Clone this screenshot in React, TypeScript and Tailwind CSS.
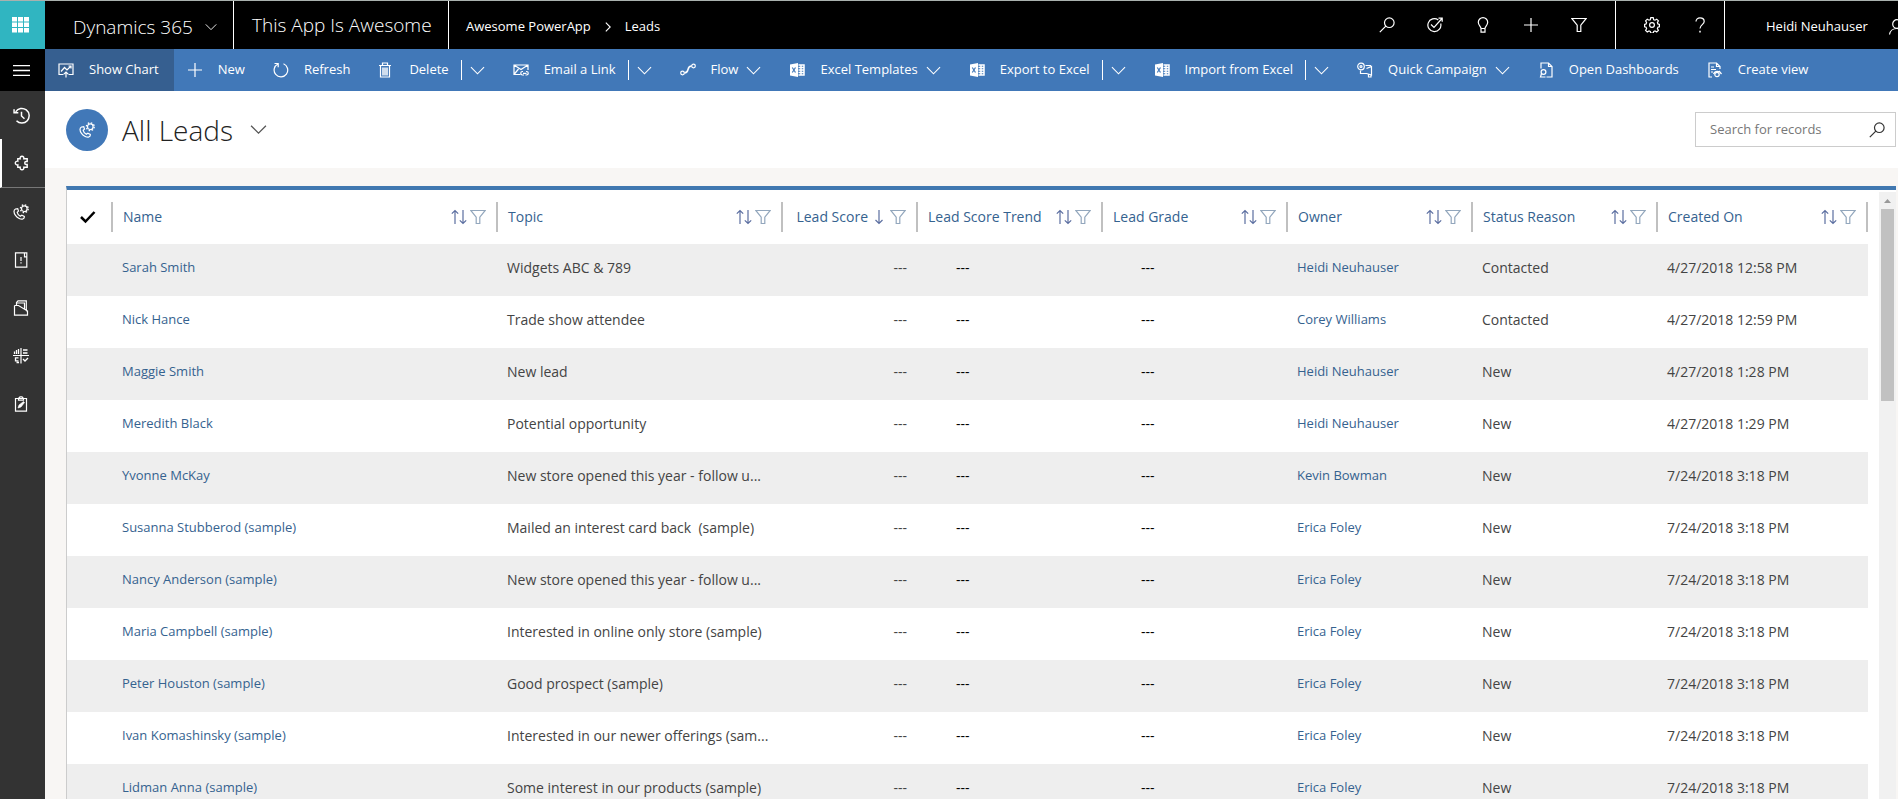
import { ReactNode } from "react";
import clsx from "clsx";

const icons: Record<string, ReactNode> = {
  chart: (
    <>
      <path d="M5.500 12.500H1V2h14v10.500h-4.500" />
      <path d="M3 9.500l3.500-4 2.500 2.500L13 4M10.500 4H13v2.500" />
      <path d="M8 15.500v-5M5.800 12.200L8 10l2.200 2.200" />
    </>
  ),
  plus: <path d="M8 1v14M1 8h14" />,
  refresh: <path d="M10.500 1.800a6.800 6.800 0 1 1-5.600.2M1.500 1.500h3.700v3.700" />,
  trash: (
    <>
      <path d="M1 3.500h12M4.500 3V1h5v2M2.500 4v11h9V4" />
      <path d="M5 5.500v8M7 5.500v8M9 5.500v8" strokeWidth="1.500" />
    </>
  ),
  mail: (
    <>
      <path d="M7.500 12.500H1V3h14v5M1 3l7 4.500L15 3M1 12.500l4.500-5.500" />
      <path d="M10 9.500h-.500a1.700 1.700 0 0 0 0 3.500H11M13 9.500h.5a1.700 1.700 0 0 1 0 3.500H12.500M10 11.300h3.500" />
    </>
  ),
  flow: (
    <>
      <circle cx="2.500" cy="11" r="1.800" />
      <circle cx="13.500" cy="4" r="1.800" />
      <path d="M4.500 11c5.500 0 1.500-7 7-7" strokeWidth="1.500" />
    </>
  ),
  excel: (
    <>
      <path d="M1 2.500L9 1v14l-8-1.500z" fill="currentColor" stroke="none" />
      <path d="M9.500 3H15v10H9.500M9.500 5.500H15M9.500 8H15M9.500 10.500H15M12 3v10" strokeWidth="1.500" />
      <path d="M3.300 5.500l3.200 5M6.500 5.500l-3.200 5" className="stroke-[#4178b8]" />
    </>
  ),
  campaign: (
    <>
      <circle cx="4" cy="4.500" r="3.300" />
      <circle cx="4" cy="4.500" r="1" />
      <path d="M8.500 3.500H14M3.500 8.500v3h6l5 1.500V4.500L9.500 6.500M11.500 12v3H14v-2.500" />
    </>
  ),
  dashboards: (
    <>
      <path d="M3 6.500V1h7.500L14 4.500V15H8.500M10.500 1v3.500H14" />
      <circle cx="5.500" cy="10" r="2.400" />
      <path d="M3.500 11.500L2.500 15h5" />
    </>
  ),
  createView: (
    <>
      <path d="M5 15H2V1h7.500L13 4.500V7M9.500 1v3.500H13M4 5h3M4 7.500h5M4 10h2" />
      <circle cx="10" cy="12.500" r="2.200" />
      <path d="M6.500 12c1.500-3.500 6-3.500 8 0M12 9l2.500 3" />
    </>
  ),
  search: (
    <>
      <circle cx="10.300" cy="5.700" r="4.800" />
      <path d="M6.800 9.200L.8 15.200" />
    </>
  ),
  assist: (
    <>
      <path d="M11.300 2.900A6.500 6.500 0 1 0 13.700 6.500" />
      <path d="M4 7.500l3 3 8-9M11.500 1.200h3.700v3.600" />
    </>
  ),
  bulb: <path d="M6 11.500C6 9.500 3.300 8.500 3.300 5.300a4.700 4.700 0 0 1 9.400 0c0 3.200-2.700 4.200-2.700 6.200zM6 11.500v3.700h4v-3.700" />,
  filter: <path d="M.8 1.500h14.400L9.800 8.200v6.300H6.200V8.200z" />,
  gear: (
    <>
      <circle cx="8" cy="8" r="2.400" />
      <path d="M6.800 .7h2.400l.5 2 1.300.5 1.700-1 1.700 1.700-1 1.700.5 1.300 1.500.5v2.400l-1.500.5-.5 1.300 1 1.700-1.700 1.700-1.700-1-1.300.5-.5 1.500H6.800l-.5-1.500-1.300-.5-1.700 1-1.700-1.700 1-1.700-.5-1.300-1.500-.5V7.400l1.500-.5.5-1.300-1-1.700 1.700-1.700 1.700 1 1.300-.5z" />
    </>
  ),
  help: (
    <>
      <path d="M4 4.500C4 2.300 5.700.8 8 .8s4.200 1.400 4.200 3.600C12.200 7.500 8 7.800 8 11.500" />
      <path d="M8 13.800v1.700" strokeWidth="1.500" />
    </>
  ),
  person: (
    <>
      <circle cx="9" cy="5" r="4.300" />
      <path d="M1.500 15.500C2 12 5 9.500 9 9.500s7 2.500 7.500 6" />
    </>
  ),
  menu: <path d="M0 3.500h16M0 8h16M0 12.500h16" />,
  recent: (
    <>
      <path d="M2.500 4.500A6.900 6.900 0 1 1 3.300 13M1 2v3.500h4" strokeWidth="1.400" />
      <path d="M8 4.500V8.500l2.800 2.500" strokeWidth="1.400" />
    </>
  ),
  puzzle: (
    <path
      d="M6.200 3.700a1.900 1.900 0 1 1 3.600 0h3.400v2.800h-1a1.500 1.500 0 0 0 0 3h1v2.800H9.800a1.900 1.900 0 1 1-3.600 0H3.800V9.800a1.900 1.900 0 1 1 0-3.600V3.700z"
      strokeWidth="1.400"
    />
  ),
  lead: (
    <>
      <path d="M2.500 5C.5 6 .5 8.500 2.500 11.300c2 2.700 5.500 4.500 7.300 3.700 1.200-.5 1.700-1.500 1.500-2.500l-2.500-1.300-1.500 1C5.800 11.300 4.500 9.800 4.200 8.300l1.300-1.200-.8-2.500z" />
      <circle cx="11.300" cy="4.700" r="2.800" />
      <circle cx="11.300" cy="4.700" r="3.900" strokeWidth="1.400" strokeDasharray="1.500 1.563" />
    </>
  ),
  opportunity: (
    <>
      <path d="M2.500.8h11.300V15.200H2.500zM11.500.8v4h2.300" />
      <path d="M8 5v4M8 10.300v1.200" />
    </>
  ),
  box: (
    <>
      <path d="M1.500 5.500h4L14.500 11M1.500 5.500v9.700h13V11h-1.300M3.500 5V2.500L5 .8h8.300V10" />
      <path d="M4 3h7.500v6" />
    </>
  ),
  tiles: (
    <>
      <path d="M0 7.500h16M8 0v15.500" />
      <path d="M1.500 6V3.500M3.500 6V2M5.500 6V1M10 2h4.500M10 5h4.500M5.500 9.800h-3v3h3M3.500 14.500H6M10 11l2 2 3-3" strokeWidth="1.300" />
    </>
  ),
  clipboard: (
    <>
      <path d="M2.500 2.500h11v12.700h-11zM5.500 2.500L7 .8h2l1.500 1.700v1.700h-5z" />
      <path d="M5 12l1-3 4.500-3.500 1 1L8 11z" fill="currentColor" strokeWidth=".6" />
    </>
  ),
  sort: <path d="M4 15V1.500M.800 4.700L4 1.500l3.200 3.200M12 1v13.500M8.800 11.300l3.200 3.200 3.200-3.200" />,
  sortDown: <path d="M8 1v13.500M4.500 11l3.500 3.500 3.500-3.500" />,
  chevron: <path d="M1 4.500l7 7 7-7" />,
  chevronRight: <path d="M4.500 1L11.500 8l-7 7" strokeWidth="1.800" />,
  check: <path d="M1 8l4.500 4.500L14.500 3" strokeWidth="2.500" />,
};

function Icon({ name, className = "size-4" }: { name: string; className?: string }) {
  return (
    <svg viewBox="0 0 16 16" fill="none" stroke="currentColor" strokeWidth="1.200" className={clsx("shrink-0", className)} aria-hidden="true">
      {icons[name]}
    </svg>
  );
}

const commands = [
  { label: "Show Chart", icon: "chart", active: true },
  { label: "New", icon: "plus" },
  { label: "Refresh", icon: "refresh" },
  { label: "Delete", icon: "trash", split: true },
  { label: "Email a Link", icon: "mail", split: true },
  { label: "Flow", icon: "flow", menu: true },
  { label: "Excel Templates", icon: "excel", menu: true },
  { label: "Export to Excel", icon: "excel", split: true },
  { label: "Import from Excel", icon: "excel", split: true },
  { label: "Quick Campaign", icon: "campaign", menu: true },
  { label: "Open Dashboards", icon: "dashboards" },
  { label: "Create view", icon: "createView" },
];

const columns = [
  { label: "Name", width: "" },
  { label: "Topic", width: "w-[285px]" },
  { label: "Lead Score", width: "w-[135px]", sorted: true },
  { label: "Lead Score Trend", width: "w-[185px]" },
  { label: "Lead Grade", width: "w-[185px]" },
  { label: "Owner", width: "w-[185px]" },
  { label: "Status Reason", width: "w-[185px]" },
  { label: "Created On", width: "w-[210px]" },
];

const leads = [
  ["Sarah Smith", "Widgets ABC & 789", "Heidi Neuhauser", "Contacted", "4/27/2018 12:58 PM"],
  ["Nick Hance", "Trade show attendee", "Corey Williams", "Contacted", "4/27/2018 12:59 PM"],
  ["Maggie Smith", "New lead", "Heidi Neuhauser", "New", "4/27/2018 1:28 PM"],
  ["Meredith Black", "Potential opportunity", "Heidi Neuhauser", "New", "4/27/2018 1:29 PM"],
  ["Yvonne McKay", "New store opened this year - follow u...", "Kevin Bowman", "New", "7/24/2018 3:18 PM"],
  ["Susanna Stubberod (sample)", "Mailed an interest card back  (sample)", "Erica Foley", "New", "7/24/2018 3:18 PM"],
  ["Nancy Anderson (sample)", "New store opened this year - follow u...", "Erica Foley", "New", "7/24/2018 3:18 PM"],
  ["Maria Campbell (sample)", "Interested in online only store (sample)", "Erica Foley", "New", "7/24/2018 3:18 PM"],
  ["Peter Houston (sample)", "Good prospect (sample)", "Erica Foley", "New", "7/24/2018 3:18 PM"],
  ["Ivan Komashinsky (sample)", "Interested in our newer offerings (sam...", "Erica Foley", "New", "7/24/2018 3:18 PM"],
  ["Lidman Anna (sample)", "Some interest in our products (sample)", "Erica Foley", "New", "7/24/2018 3:18 PM"],
];

function TopBar() {
  return (
    <header className="flex h-[49px] shrink-0 overflow-hidden border-t border-[#a9b1ae] bg-black text-white">
      <button aria-label="App launcher" className="grid w-[45px] shrink-0 place-content-center bg-[#30b5c1] pr-[3px]">
        <svg viewBox="0 0 18 16" fill="currentColor" className="h-4 w-[18px]">
          {[0, 6, 12].map((x) =>
            [0, 5.5, 11].map((y) => <rect key={`${x}-${y}`} x={x} y={y} width="5" height="4.500" />)
          )}
        </svg>
      </button>
      <button className="flex w-[189px] shrink-0 items-center gap-3 border-r border-white pt-1 pl-7 text-[19px] font-light">
        Dynamics 365
        <Icon name="chevron" className="size-3" />
      </button>
      <div className="flex w-[215px] shrink-0 items-center border-r border-white pl-[18px] text-[19px] font-light whitespace-nowrap">This App Is Awesome</div>
      <nav className="flex items-center gap-3 pt-1 pl-[17px] text-[13px] whitespace-nowrap">
        <a href="#app">Awesome PowerApp</a>
        <Icon name="chevronRight" className="size-[10px]" />
        <a href="#leads">Leads</a>
      </nav>
      <div className="ml-auto flex shrink-0 border-r border-white pr-3">
        {["search", "assist", "bulb", "plus", "filter"].map((name) => (
          <button key={name} aria-label={name} className="grid w-12 place-content-center">
            <Icon name={name} />
          </button>
        ))}
      </div>
      <div className="flex shrink-0 border-r border-white pl-3">
        {["gear", "help"].map((name) => (
          <button key={name} aria-label={name} className="grid w-12 place-content-center">
            <Icon name={name} />
          </button>
        ))}
      </div>
      <button className="flex w-[173px] shrink-0 items-center gap-5 pt-1 pl-[41px] text-[13px] whitespace-nowrap">
        Heidi Neuhauser
        <Icon name="person" />
      </button>
    </header>
  );
}

function SideBar() {
  return (
    <nav className="flex w-[45px] shrink-0 flex-col bg-[#333] text-white">
      <button aria-label="Site map" className="grid h-[42px] place-content-center bg-black pr-[3px]">
        <Icon name="menu" className="size-[17px]" />
      </button>
      <button aria-label="Recent" className="grid h-12 place-content-center pr-[3px]">
        <Icon name="recent" className="size-[17px]" />
      </button>
      <button aria-label="Awesome PowerApp" className="grid h-[49px] place-content-center border-b border-l-2 border-b-[#777] border-l-white pr-[3px]">
        <Icon name="puzzle" />
      </button>
      {["lead", "opportunity", "box", "tiles", "clipboard"].map((name) => (
        <button key={name} aria-label={name} className="grid h-12 place-content-center pr-[3px]">
          <Icon name={name} />
        </button>
      ))}
    </nav>
  );
}

function CommandBar() {
  return (
    <div className="flex h-[42px] shrink-0 overflow-hidden bg-[#4178b8] text-[13px] whitespace-nowrap text-white">
      {commands.map((c) => (
        <div key={c.label} className="flex shrink-0 items-center">
          <button className={clsx("flex h-full items-center pl-[13px]", c.split ? "pr-3" : "pr-[15px]", c.active && "bg-[#365f90]")}>
            <Icon name={c.icon} className="mr-[15px] size-4" />
            {c.label}
            {c.menu && <Icon name="chevron" className="ml-2 size-[15px]" />}
          </button>
          {c.split && (
            <button aria-label={`${c.label} options`} className="flex h-5 w-[39px] items-center border-l border-white pl-2">
              <Icon name="chevron" className="size-[15px]" />
            </button>
          )}
        </div>
      ))}
    </div>
  );
}

function LeadGrid() {
  return (
    <table className="w-full table-fixed border-collapse text-left whitespace-pre text-[#444]">
      <thead>
        <tr className="h-[54px] text-sm text-[#35628f]">
          <th className="w-[46px] p-0 font-normal">
            <button aria-label="Select all" className="flex h-[30px] w-full items-center border-r-2 border-[#c0c0c0] pl-[13px] text-black">
              <Icon name="check" />
            </button>
          </th>
          {columns.map((c) => (
            <th key={c.label} className={clsx("p-0 font-normal", c.width)}>
              <div className="flex h-[30px] items-center border-r-2 border-[#c0c0c0] px-[10px]">
                <button className={clsx("flex-1", c.sorted ? "text-right" : "text-left")}>{c.label}</button>
                <button aria-label={`Sort by ${c.label}`} className={clsx("text-[#5b6ea0]", c.sorted ? "mx-[3px]" : "mr-[3px]")}>
                  <Icon name={c.sorted ? "sortDown" : "sort"} />
                </button>
                <button aria-label={`Filter by ${c.label}`} className="text-[#93a7bd]">
                  <Icon name="filter" />
                </button>
              </div>
            </th>
          ))}
        </tr>
      </thead>
      <tbody>
        {leads.map(([name, topic, owner, status, created]) => (
          <tr key={name} className="h-[52px] text-sm odd:bg-[#eee]">
            <td />
            <td className="pt-0 pb-[5px] pl-[9px] text-[13px] text-[#35628f]">
              <a href="#lead">{name}</a>
            </td>
            <td className="pt-0 pb-[5px] pl-[9px]">{topic}</td>
            <td className="pt-0 pr-[11px] pb-[5px] text-right">---</td>
            <td className="pt-0 pb-[5px] pl-[38px] text-black">---</td>
            <td className="pt-0 pb-[5px] pl-[38px] text-black">---</td>
            <td className="pt-0 pb-[5px] pl-[9px] text-[13px] text-[#35628f]">
              <a href="#owner">{owner}</a>
            </td>
            <td className="pt-0 pb-[5px] pl-[9px]">{status}</td>
            <td className="pt-0 pb-[5px] pl-[9px]">{created}</td>
          </tr>
        ))}
      </tbody>
    </table>
  );
}

export default function App() {
  return (
    <div className="flex h-screen flex-col overflow-hidden font-['Open_Sans','Noto_Sans',sans-serif]">
      <TopBar />
      <div className="flex min-h-0 flex-1">
        <SideBar />
        <main className="flex min-w-0 flex-1 flex-col bg-[#f8f6f4]">
          <CommandBar />
          <div className="flex h-[77px] shrink-0 items-center bg-white pr-[2px] pl-[21px]">
            <div className="grid size-[42px] place-content-center rounded-full bg-[#4178b8] text-white">
              <Icon name="lead" />
            </div>
            <h1 className="ml-[14px] text-[28px] font-light text-[#222]">All Leads</h1>
            <button aria-label="Select view" className="ml-[17px] text-[#555]">
              <Icon name="chevron" className="size-[17px]" />
            </button>
            <form className="ml-auto flex h-[35px] w-[201px] items-center border border-[#ccc] pr-[10px] pl-[14px]">
              <input aria-label="Search for records" placeholder="Search for records" className="min-w-0 flex-1 text-[13px] outline-none placeholder:text-[#777]" />
              <button aria-label="Search" className="text-[#333]">
                <Icon name="search" />
              </button>
            </form>
          </div>
          <section className="mt-[18px] mr-[2px] ml-[21px] flex min-h-0 flex-1 border-t-4 border-l border-t-[#4178b0] border-l-[#ccc] bg-white">
            <div className="min-w-0 flex-1 overflow-hidden">
              <LeadGrid />
            </div>
            <div className="mt-[2px] ml-[11px] flex w-[17px] flex-col items-center bg-[#f1f1f1]">
              <svg viewBox="0 0 17 17" className="size-[17px] fill-[#999]">
                <path d="M5 11l3.500-4 3.500 4z" />
              </svg>
              <div className="h-48 w-[13px] bg-[#c1c1c1]" />
            </div>
          </section>
        </main>
      </div>
    </div>
  );
}
